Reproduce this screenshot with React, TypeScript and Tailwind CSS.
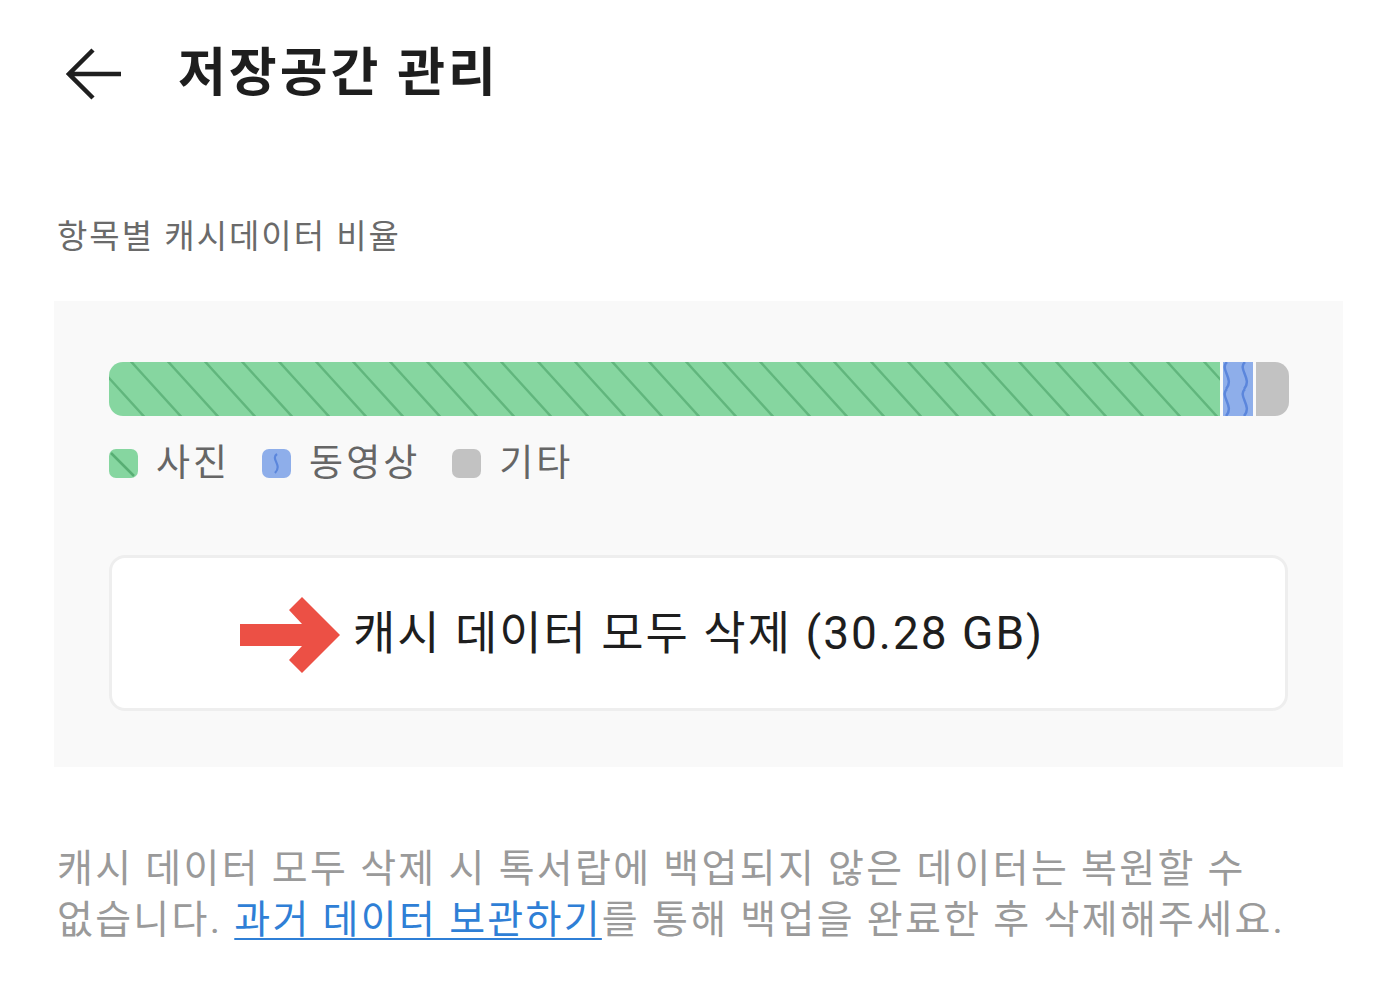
import React from "react";

const FONT = "font-['Roboto','Noto_Sans_CJK_KR',sans-serif]";

function BackArrow() {
  return (
    <svg width="58" height="54" viewBox="0 0 58 54" fill="none">
      <path d="M55 27H4M27 3L3 27L27 51" stroke="#1f1f1f" strokeWidth="4.5" strokeLinecap="butt" strokeLinejoin="miter" />
    </svg>
  );
}

function UsageBar() {
  // green = photos, blue = videos, gray = other
  return (
    <svg width="1180" height="54" viewBox="0 0 1180 54" className="block">
      <defs>
        <pattern id="diag" width="37" height="54" patternUnits="userSpaceOnUse">
          <path d="M-20 -6L40 60M17 -6L77 60M-57 -6L3 60" stroke="#58ae74" strokeOpacity="0.8" strokeWidth="2.5" />
        </pattern>
        <pattern id="wave" x="1114" width="30" height="27" patternUnits="userSpaceOnUse">
          <path d="M4 0C-4 7 12 17 3 27M22 0C14 7 30 17 21 27" stroke="#5b86dc" strokeWidth="2.5" fill="none" />
        </pattern>
        <clipPath id="round">
          <rect x="0" y="0" width="1180" height="54" rx="14" />
        </clipPath>
      </defs>
      <g clipPath="url(#round)">
        <rect x="0" y="0" width="1111" height="54" fill="#86d6a0" />
        <rect x="0" y="0" width="1111" height="54" fill="url(#diag)" />
        <rect x="1114" y="0" width="30" height="54" fill="#8eaeea" />
        <rect x="1114" y="0" width="30" height="54" fill="url(#wave)" />
        <rect x="1147" y="0" width="33" height="54" fill="#c2c2c2" />
      </g>
    </svg>
  );
}

function LegendItem({ kind, label }: { kind: "photo" | "video" | "etc"; label: string }) {
  return (
    <div className="flex items-center gap-[18px]">
      <svg width="29" height="29" viewBox="0 0 29 29">
        <defs>
          <clipPath id={`lg-${kind}`}>
            <rect width="29" height="29" rx="7" />
          </clipPath>
        </defs>
        <g clipPath={`url(#lg-${kind})`}>
          {kind === "photo" && (
            <>
              <rect width="29" height="29" fill="#86d6a0" />
              <path d="M2 4L25 27" stroke="#58ae74" strokeWidth="2.5" />
            </>
          )}
          {kind === "video" && (
            <>
              <rect width="29" height="29" fill="#8eaeea" />
              <path d="M15 5C8 10 21 16 13 24" stroke="#5b86dc" strokeWidth="2.2" fill="none" />
            </>
          )}
          {kind === "etc" && <rect width="29" height="29" fill="#c2c2c2" />}
        </g>
      </svg>
      <span className="text-[37px] leading-none text-[#666666] tracking-[3px]">{label}</span>
    </div>
  );
}

function RedArrow() {
  return (
    <svg width="102" height="76" viewBox="0 0 102 76">
      <path d="M0 27H62L49 13L62 0L100 38L62 76L49 63L62 49H0Z" fill="#ec5045" />
    </svg>
  );
}

export default function App() {
  return (
    <div className={`${FONT} w-[1398px] h-[981px] bg-white`}>
      <header className="flex items-center h-[147px] pl-[66px]">
        <BackArrow />
        <h1 className="ml-[54px] text-[52px] font-bold tracking-[3px] text-[#1e1e1e] leading-none">저장공간 관리</h1>
      </header>

      <div className="pl-[57px] pt-[73px] text-[33px] leading-none text-[#6a6a6a] tracking-[2px]">항목별 캐시데이터 비율</div>

      <section className="mt-[48px] ml-[54px] w-[1289px] h-[466px] bg-[#f9f9f9] pt-[61px] px-[55px]">
        <UsageBar />
        <div className="mt-[29px] flex items-center gap-[32px]">
          <LegendItem kind="photo" label="사진" />
          <LegendItem kind="video" label="동영상" />
          <LegendItem kind="etc" label="기타" />
        </div>
        <div className="relative mt-[73px] h-[156px] bg-white border-[3px] border-[#eeeeee] rounded-[16px] flex items-center justify-center">
          <div className="absolute left-[128px] top-[39px]">
            <RedArrow />
          </div>
          <span className="text-[46px] leading-none text-[#1e1e1e] tracking-[2px]">캐시 데이터 모두 삭제 (30.28 GB)</span>
        </div>
      </section>

      <p className="mt-[77px] pl-[57px] text-[39px] leading-[51px] text-[#9a9a9a] tracking-[2.3px] whitespace-nowrap">
        캐시 데이터 모두 삭제 시 톡서랍에 백업되지 않은 데이터는 복원할 수
        <br />
        없습니다. <a className="text-[#2f7fd6] underline underline-offset-[5px] decoration-[2px]">과거 데이터 보관하기</a>를 통해 백업을 완료한 후 삭제해주세요.
      </p>
    </div>
  );
}
